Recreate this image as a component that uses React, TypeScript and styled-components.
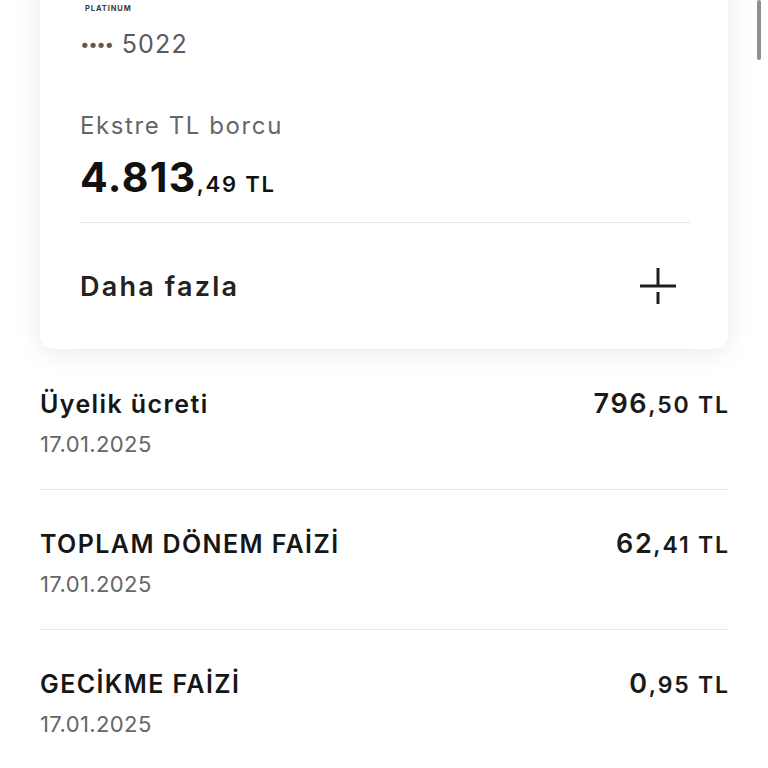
import React from "react";
import styled, { createGlobalStyle } from "styled-components";

interface IFee {
  title: string;
  date: string;
  whole: string;
  cents: string;
}

const fees: IFee[] = [
  { title: "Üyelik ücreti", date: "17.01.2025", whole: "796", cents: ",50 TL" },
  { title: "TOPLAM DÖNEM FAİZİ", date: "17.01.2025", whole: "62", cents: ",41 TL" },
  { title: "GECİKME FAİZİ", date: "17.01.2025", whole: "0", cents: ",95 TL" },
];

const GlobalStyle = createGlobalStyle`
  html, body {
    margin: 0;
    padding: 0;
    background: #ffffff;
    overflow: hidden;
  }
  body {
    font-family: Inter, "Noto Sans", "Liberation Sans", sans-serif;
    color: #1c1c1c;
  }
`;

const SPage = styled.div`
  position: relative;
  width: 768px;
  height: 768px;
  overflow: hidden;
  padding: 0 40px;
  box-sizing: border-box;
`;

const SScrollbar = styled.div`
  position: absolute;
  top: 0;
  right: 7px;
  width: 4px;
  height: 60px;
  border-radius: 2px;
  background: #8f8f8f;
`;

const SCard = styled.div`
  margin-top: -24px;
  padding: 28px 38px 0 40px;
  background: #ffffff;
  border-radius: 14px;
  box-shadow: 0 4px 26px rgba(0, 0, 0, 0.09);
  display: flex;
  flex-direction: column;
`;

const SBrand = styled.div`
  margin-left: 5px;
  font-size: 7.5px;
  line-height: 10px;
  font-weight: 700;
  letter-spacing: 0.9px;
  color: #3a3a3a;
`;

const SCardNo = styled.div`
  margin-top: 15px;
  font-size: 25px;
  line-height: 30px;
  color: #5a5a5a;
  letter-spacing: 1.2px;
`;

const SDots = styled.span`
  font-size: 17px;
  letter-spacing: -1.4px;
  margin-right: 9px;
  vertical-align: 3px;
`;

const SLabel = styled.div`
  margin-top: 52px;
  font-size: 24px;
  line-height: 30px;
  color: #666666;
  letter-spacing: 1.6px;
`;

const SBigAmount = styled.div`
  margin-top: 12px;
  font-size: 41px;
  line-height: 48px;
  font-weight: 700;
  color: #111111;
  letter-spacing: 1.4px;
`;

const SSmall = styled.span<{ $size: number }>`
  font-size: ${(p) => p.$size}px;
  line-height: 1;
  font-weight: 600;
  letter-spacing: 1.8px;
`;

const SDivider = styled.div`
  margin-top: 21px;
  height: 1px;
  background: #e6e6e6;
`;

const SMoreRow = styled.div`
  height: 126px;
  display: flex;
  align-items: center;
  justify-content: space-between;
`;

const SMoreText = styled.div`
  font-size: 27px;
  font-weight: 600;
  color: #222222;
  letter-spacing: 2.2px;
`;

const SList = styled.div`
  margin-top: 1px;
  display: flex;
  flex-direction: column;
`;

const SRow = styled.div`
  padding: 39px 0 31px;
  border-bottom: 1px solid #e8e8e8;
  display: flex;
  justify-content: space-between;
  align-items: flex-start;
`;

const SRowInfo = styled.div`
  display: flex;
  flex-direction: column;
  gap: 11px;
`;

const STitle = styled.div`
  font-size: 25px;
  line-height: 30px;
  font-weight: 600;
  color: #161616;
  letter-spacing: 1.4px;
`;

const SDate = styled.div`
  font-size: 22px;
  line-height: 28px;
  color: #666666;
  letter-spacing: 0.4px;
`;

const SAmount = styled.div`
  font-size: 27px;
  line-height: 30px;
  font-weight: 600;
  color: #1a1a1a;
  letter-spacing: 1.6px;
  margin-right: -1.8px;
`;

const PlusIcon: React.FC = () => (
  <svg width="36" height="36" viewBox="0 0 36 36" style={{ marginRight: 14 }}>
    <g stroke="#1e1e1e" strokeWidth="3" fill="none">
      <line x1="0" y1="18" x2="36" y2="18" />
      <line x1="18" y1="0" x2="18" y2="18" />
      <line x1="18" y1="24" x2="18" y2="36" />
    </g>
  </svg>
);

const App: React.FC = () => {
  return (
    <>
      <GlobalStyle />
      <SPage>
        <SCard>
          <SBrand>PLATINUM</SBrand>
          <SCardNo>
            <SDots>••••</SDots>5022
          </SCardNo>
          <SLabel>Ekstre TL borcu</SLabel>
          <SBigAmount>
            4.813<SSmall $size={22}>,49 TL</SSmall>
          </SBigAmount>
          <SDivider />
          <SMoreRow>
            <SMoreText>Daha fazla</SMoreText>
            <PlusIcon />
          </SMoreRow>
        </SCard>
        <SList>
          {fees.map((f) => (
            <SRow key={f.title}>
              <SRowInfo>
                <STitle>{f.title}</STitle>
                <SDate>{f.date}</SDate>
              </SRowInfo>
              <SAmount>
                {f.whole}
                <SSmall $size={23}>{f.cents}</SSmall>
              </SAmount>
            </SRow>
          ))}
        </SList>
        <SScrollbar />
      </SPage>
    </>
  );
};

export default App;
